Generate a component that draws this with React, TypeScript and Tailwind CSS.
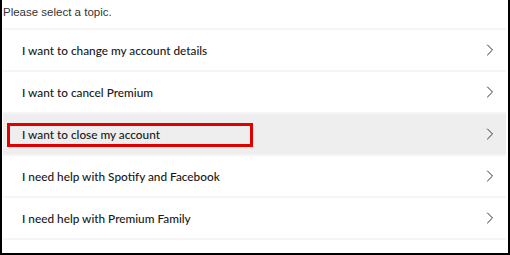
import { ChevronRight } from 'lucide-react';

const topics = [
  'I want to change my account details',
  'I want to cancel Premium',
  'I want to close my account',
  'I need help with Spotify and Facebook',
  'I need help with Premium Family',
];

const App = () => {
  return (
    <div className="w-[510px] h-[255px] bg-white border-l-2 border-r-2 border-b-2 border-black overflow-hidden font-['Lato',sans-serif]">
      <div className="h-[28px] pl-[1px] pt-[4px] text-[11.5px] text-[#333333] font-['Liberation_Sans',sans-serif]">
        Please select a topic.
      </div>
      <div className="px-[1px] pr-[2px]">
        {topics.map((t, i) => {
          const active = i === 2;
          return (
            <div
              key={t}
              className={`h-[42px] flex items-center justify-between border-t-2 border-[#f5f5f5] ${active ? 'bg-[#eeeeee]' : ''}`}
            >
              <div className="pl-[4px]">
                <span
                  className={`inline-flex items-center h-[24px] whitespace-nowrap pl-[12px] text-[11.8px] font-medium text-[#181818] border-[3px] ${active ? 'w-[246px] border-[#e00000]' : 'border-transparent'}`}
                >
                  {t}
                </span>
              </div>
              <ChevronRight className="w-[20px] h-[20px] mr-[6px] text-[#333333]" strokeWidth={1.2} />
            </div>
          );
        })}
        <div className="border-t-2 border-[#f5f5f5]" />
      </div>
    </div>
  );
};

export default App;
